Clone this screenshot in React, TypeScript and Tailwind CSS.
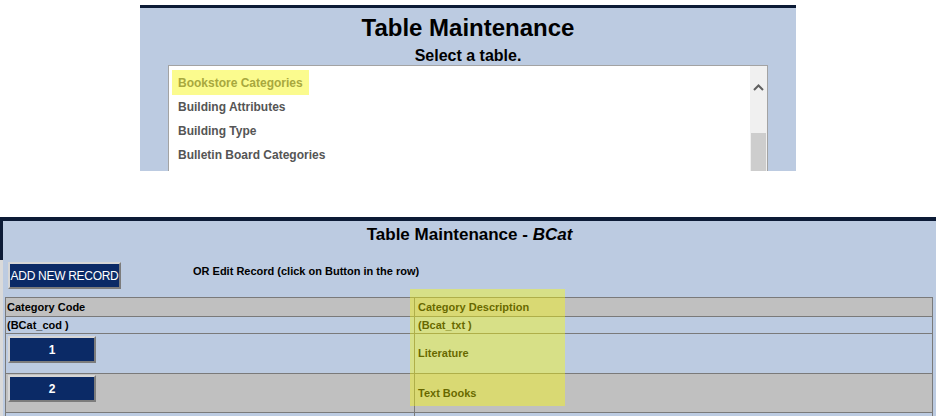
import React from "react";

const navy = "bg-[#0b2a66]";

function RowButton({ label }: { label: string }) {
  return (
    <button
      className={`w-[88px] h-[27px] ${navy} text-white text-[12px] leading-none border-2 border-t-[#d6d6d6] border-l-[#d6d6d6] border-b-[#7c7c7c] border-r-[#7c7c7c] flex items-center justify-center`}
    >
      {label}
    </button>
  );
}

export default function App() {
  const items = [
    "Bookstore Categories",
    "Building Attributes",
    "Building Type",
    "Bulletin Board Categories",
  ];
  return (
    <div className="w-[936px] h-[416px] bg-white overflow-hidden font-['Liberation_Sans',Arial,sans-serif] text-black">
      {/* Top panel */}
      <div className="pt-[5px] pl-[140px]">
        <div className="w-[656px] h-[166px] bg-[#bccbe1] border-t-[3px] border-[#0c1b36] flex flex-col items-center overflow-hidden">
          <div className="mt-[6px] text-[24px] leading-[28px] font-bold">Table Maintenance</div>
          <div className="mt-[5px] text-[16px] leading-[18px] font-bold">Select a table.</div>
          <div className="self-start ml-[28px] w-[600px] flex-1 bg-white border border-b-0 border-[#a3a3a3] flex">
            <div className="flex-1 pt-[4px] pl-[3px] flex flex-col items-start text-[12px] font-bold text-[#555555]">
              {items.map((it, i) =>
                i === 0 ? (
                  <div key={it} className="h-[25px] leading-[27px] px-[6px] bg-[#fbfb8e] text-[#a8a83e]">
                    {it}
                  </div>
                ) : (
                  <div key={it} className="h-[24px] leading-[25px] px-[6px]">
                    {it}
                  </div>
                )
              )}
            </div>
            <div className="w-[17px] bg-[#f0f0f0] flex flex-col items-center">
              <svg className="mt-[18px]" width="11" height="7" viewBox="0 0 11 7">
                <polyline points="1,6 5.5,1.5 10,6" fill="none" stroke="#5f5f5f" strokeWidth="2" />
              </svg>
              <div className="mt-auto w-[15px] h-[38px] bg-[#cdcdcd]" />
            </div>
          </div>
        </div>
      </div>

      {/* Bottom panel */}
      <div className="mt-[46px] flex h-[199px]">
        <div className="w-[3px] flex flex-col">
          <div className="h-[43px] bg-[#0c1b36]" />
          <div className="flex-1 bg-[#dadada]" />
        </div>
        <div className="flex-1 relative bg-[#bccbe1] border-t-[4px] border-[#0c1b36] flex flex-col overflow-hidden">
          <div className="mt-[3px] text-center text-[17px] leading-[21px] font-bold">
            Table Maintenance - <i>BCat</i>
          </div>
          <div className="mt-[17px] ml-[5px] flex items-start">
            <button
              className={`w-[113px] h-[27px] ${navy} text-white text-[12px] tracking-[-0.3px] whitespace-nowrap border-2 border-t-[#d6d6d6] border-l-[#d6d6d6] border-b-[#7c7c7c] border-r-[#7c7c7c] flex items-center justify-center`}
            >
              ADD NEW RECORD
            </button>
            <div className="ml-[72px] mt-[3px] text-[11px] leading-[13px] font-bold">
              OR Edit Record (click on Button in the row)
            </div>
          </div>

          <div className="mt-[8px] ml-[2px] mr-[3px] flex-1 border-t border-l border-r border-[#7a7a7a] text-[11px] font-bold">
            <div className="grid grid-cols-[409px_1fr] h-[19px] bg-[#c0c0c0] border-b border-[#7a7a7a] leading-[18px]">
              <div className="pl-[1px] border-r border-[#7a7a7a]">Category Code</div>
              <div className="pl-[3px]">Category Description</div>
            </div>
            <div className="grid grid-cols-[409px_1fr] h-[17px] border-b border-[#7a7a7a] leading-[16px]">
              <div className="pl-[1px] border-r border-[#7a7a7a]">(BCat_cod )</div>
              <div className="pl-[3px]">(Bcat_txt )</div>
            </div>
            <div className="grid grid-cols-[409px_1fr] h-[40px] border-b border-[#7a7a7a]">
              <div className="pl-[2px] pt-[2px] border-r border-[#7a7a7a]">
                <RowButton label="1" />
              </div>
              <div className="pl-[3px] flex items-center">Literature</div>
            </div>
            <div className="grid grid-cols-[409px_1fr] h-[39px] bg-[#c0c0c0] border-b border-[#7a7a7a]">
              <div className="pl-[2px] pt-[1px] border-r border-[#7a7a7a]">
                <RowButton label="2" />
              </div>
              <div className="pl-[3px] pt-[1px] flex items-center">Text Books</div>
            </div>
            <div className="grid grid-cols-[409px_1fr] h-[20px]">
              <div className="border-r border-[#7a7a7a]" />
              <div />
            </div>
          </div>

          {/* yellow highlight annotation */}
          <div className="absolute left-[407px] top-[68px] w-[155px] h-[117px] bg-[rgba(255,255,0,0.4)] pointer-events-none" />
        </div>
      </div>
    </div>
  );
}
